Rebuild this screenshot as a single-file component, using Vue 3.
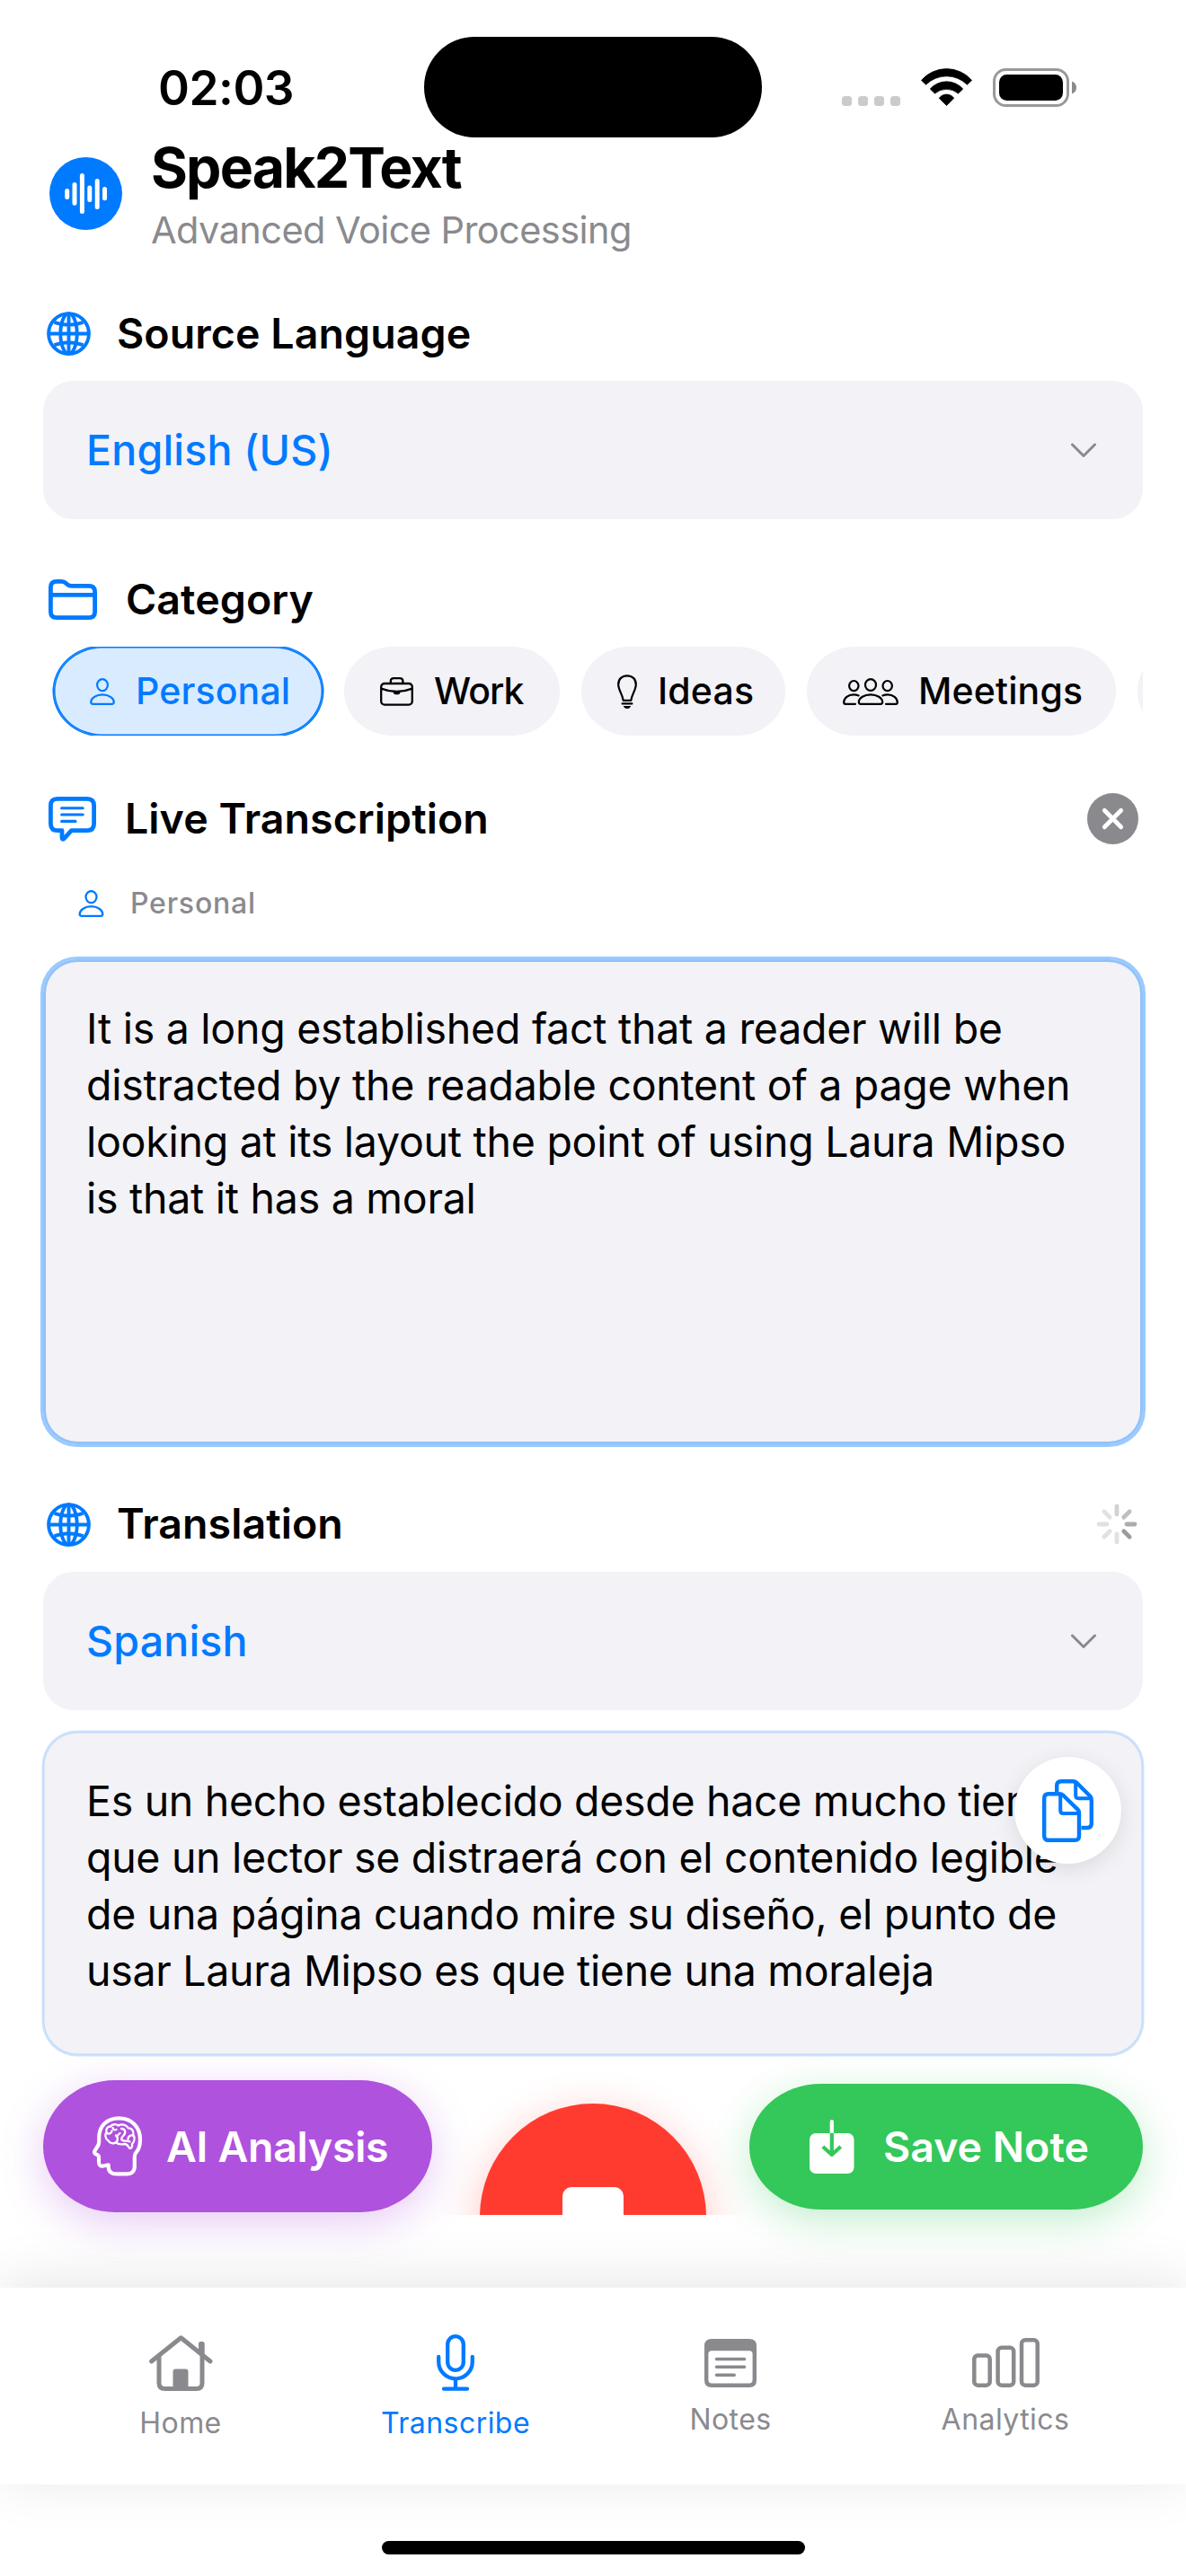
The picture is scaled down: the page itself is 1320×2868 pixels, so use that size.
<script setup>
const chips = [
  { id: 'personal', label: 'Personal', active: true },
  { id: 'work', label: 'Work' },
  { id: 'ideas', label: 'Ideas' },
  { id: 'meetings', label: 'Meetings' },
  { id: 'more', label: '' },
]

const transcript = [
  'It is a long established fact that a reader will be',
  'distracted by the readable content of a page when',
  'looking at its layout the point of using Laura Mipso',
  'is that it has a moral',
]

const translation = [
  'Es un hecho establecido desde hace mucho tiempo',
  'que un lector se distraerá con el contenido legible',
  'de una página cuando mire su diseño, el punto de',
  'usar Laura Mipso es que tiene una moraleja',
]

const spokes = ['#d2d2d3', '#bfbfc0', '#acacad', '#9b9b9c', '#e1e1e2', '#e1e1e2', '#e1e1e2', '#e1e1e2']
</script>

<template>
  <div class="screen">
    <header class="status">
      <div class="time">02:03</div>
      <div class="island"></div>
      <div class="indicators">
        <span class="dots"><i></i><i></i><i></i><i></i></span>
        <svg class="wifi" width="57" height="42" viewBox="0 0 57 42" fill="#000" stroke="#000" stroke-width=".8" stroke-linejoin="round">
          <path d="M.5 13.4A37 37 0 0 1 56.5 13.4L51.4 18.2A32.6 32.6 0 0 0 5.6 18.2Z" />
          <path d="M10.3 23A24.4 24.4 0 0 1 46.7 23L41.5 28.1A19.9 19.9 0 0 0 15.5 28.1Z" />
          <path d="M20.3 33.3A10.1 10.1 0 0 1 36.7 33.3L28.5 41.5Z" />
        </svg>
        <svg class="battery" width="94" height="43" viewBox="0 0 94 43">
          <rect x="1.5" y="1.5" width="82" height="40" rx="13" fill="none" stroke="#999" stroke-width="3" />
          <rect x="7" y="7" width="71" height="29" rx="8.5" fill="#000" />
          <path d="M88 14.5Q93 16.5 93 21.5T88 28.5Z" fill="#8a8a8a" />
        </svg>
      </div>
    </header>

    <div class="brand">
      <svg class="logo" width="81" height="81" viewBox="0 0 81 81">
        <circle cx="40.5" cy="40.5" r="40.5" fill="#007aff" />
        <g stroke="#fff" stroke-width="5" stroke-linecap="round">
          <path d="M19.7 37.4V44.6M28 30.4V51.2M36.4 20.4V60.6M44.8 34V47.6M53.2 26.4V55.4M61.5 35.4V45.8" />
        </g>
      </svg>
      <div>
        <h1>Speak2Text</h1>
        <p class="tagline">Advanced Voice Processing</p>
      </div>
    </div>

    <main>
      <div class="heading source">
        <svg class="globe" width="49" height="49" viewBox="0 0 49 49" fill="none" stroke="#007aff" stroke-width="3.9">
          <circle cx="24.5" cy="24.5" r="22.4" />
          <ellipse cx="24.5" cy="24.5" rx="9.2" ry="22.4" />
          <path d="M24.5 2V47M2 24.5H47M8.5 11.8Q24.500 17.800 40.500 11.800M8.500 37.200Q24.500 31.200 40.500 37.200" />
        </svg>
        <h2>Source Language</h2>
      </div>
      <div class="select">
        <span>English (US)</span>
        <svg width="28" height="17" viewBox="0 0 28 17" fill="none" stroke="#8a8a8e" stroke-width="3" stroke-linecap="round" stroke-linejoin="round"><path d="M1.5 2L14 14.5L26.5 2" /></svg>
      </div>

      <div class="heading category">
        <svg class="folder" width="54" height="45" viewBox="0 0 54 45" fill="none" stroke="#007aff" stroke-width="4.8">
          <path d="M2.4 9Q2.4 2.4 9 2.4H14.5Q17.5 2.4 19.3 4.2L20.7 5.5Q22.8 7.4 26 7.4H45Q51.6 7.4 51.6 13.8V36.3Q51.6 42.6 45 42.6H9Q2.4 42.6 2.4 36.3ZM2.4 17.3H51.6" />
        </svg>
        <h2>Category</h2>
      </div>
      <div class="chips">
        <div v-for="c in chips" :key="c.id" class="chip" :class="[c.id, { active: c.active }]">
          <svg v-if="c.id === 'personal'" width="28" height="30" viewBox="0 0 28 30" fill="none" stroke="#007aff" stroke-width="2.2">
            <ellipse cx="14" cy="7.6" rx="5.9" ry="6.5" />
            <path d="M1.2 26.8C1.2 22 7 18.4 14 18.4S26.8 22 26.8 26.8Q26.8 28.8 24.5 28.8H3.5Q1.2 28.8 1.2 26.8Z" />
          </svg>
          <svg v-else-if="c.id === 'work'" width="37" height="32" viewBox="0 0 37 32" fill="none" stroke="#000" stroke-width="2.3">
            <rect x="1.2" y="7" width="34.6" height="23.6" rx="3.8" />
            <path d="M11.8 7V4.6Q11.8 1.2 15.2 1.2H22Q25.4 1.2 25.4 4.6V7M1.2 12.6Q18.5 19.4 35.8 12.6" />
            <path d="M14.8 15.2H22.4V16.5Q22.4 19.3 19.8 19.3H17.4Q14.8 19.3 14.8 16.5Z" fill="#000" stroke="none" />
          </svg>
          <svg v-else-if="c.id === 'ideas'" width="22" height="38" viewBox="0 0 22 38" fill="none" stroke="#000" stroke-width="2.2">
            <path d="M6.6 28.8C6.2 22.5 1.2 17.5 1.2 11C1.2 5 5.3 1.3 11 1.3S20.8 5 20.8 11C20.8 17.5 15.8 22.5 15.4 28.8Z" stroke-linejoin="round" />
            <path d="M5.6 32.4H16.4" stroke-linecap="round" />
            <path d="M6.8 35.1H15.2Q14 38 11 38T6.8 35.1Z" fill="#000" stroke="none" />
          </svg>
          <svg v-else-if="c.id === 'meetings'" width="62" height="30" viewBox="0 0 62 30" fill="none" stroke="#000" stroke-width="2.2" stroke-linecap="round">
            <ellipse cx="31" cy="7.5" rx="6" ry="6.4" />
            <ellipse cx="12.3" cy="8.6" rx="5.2" ry="5.6" />
            <ellipse cx="49.7" cy="8.6" rx="5.2" ry="5.6" />
            <path d="M17.8 26.8C17.8 22 24 18.3 31 18.3S44.2 22 44.2 26.8Q44.2 28.8 42 28.8H20Q17.8 28.8 17.8 26.8ZM14 28.8H3Q1.2 28.8 1.2 27C1.2 22.3 6 18.3 12 18.3Q15.2 18.3 17.6 19.4M48 28.8H59Q60.8 28.8 60.8 27C60.8 22.3 56 18.3 50 18.3Q46.8 18.3 44.4 19.4" />
          </svg>
          <span>{{ c.label }}</span>
        </div>
      </div>

      <div class="heading live">
        <svg class="chat" width="53" height="50" viewBox="0 0 53 50" fill="none" stroke="#007aff" stroke-width="4.8" stroke-linejoin="round">
          <path d="M10 2.4H43Q50.6 2.4 50.6 10V30Q50.6 37.6 43 37.6H25.5L17.3 46.6Q15 48.4 15 45.4V37.6H10Q2.4 37.6 2.4 30V10Q2.4 2.4 10 2.4Z" />
          <path d="M14.6 12.8H38.2M14.6 20H38.2M14.6 27.4H30" stroke-width="3.1" stroke-linecap="round" />
        </svg>
        <h2>Live Transcription</h2>
        <svg class="clear" width="57" height="57" viewBox="0 0 57 57">
          <circle cx="28.5" cy="28.5" r="28.5" fill="#8a8a8e" />
          <path d="M19.3 19.3L37.700 37.700M37.700 19.300L19.300 37.700" stroke="#fff" stroke-width="4.8" stroke-linecap="round" />
        </svg>
      </div>
      <div class="tag">
        <svg width="29" height="30" viewBox="0 0 28 30" fill="none" stroke="#007aff" stroke-width="2.3">
          <ellipse cx="14" cy="7.6" rx="6" ry="6.5" />
          <path d="M1.2 26.8C1.2 22 7 18.2 14 18.2S26.8 22 26.8 26.8Q26.8 28.8 24.5 28.8H3.5Q1.2 28.8 1.2 26.8Z" />
        </svg>
        <span>Personal</span>
      </div>
      <div class="box transcript">
        <span v-for="line in transcript" :key="line">{{ line }}</span>
      </div>

      <div class="heading translate">
        <svg class="globe" width="49" height="49" viewBox="0 0 49 49" fill="none" stroke="#007aff" stroke-width="3.9">
          <circle cx="24.5" cy="24.5" r="22.4" />
          <ellipse cx="24.5" cy="24.5" rx="9.2" ry="22.4" />
          <path d="M24.5 2V47M2 24.5H47M8.5 11.8Q24.500 17.800 40.500 11.800M8.500 37.200Q24.500 31.200 40.500 37.200" />
        </svg>
        <h2>Translation</h2>
        <svg class="spinner" width="46" height="46" viewBox="-23 -23 46 46" stroke-width="4.8" stroke-linecap="round">
          <path v-for="(color, i) in spokes" :key="i" d="M0 -11V-20" :stroke="color" :transform="`rotate(${i * 45})`" />
        </svg>
      </div>
      <div class="select">
        <span>Spanish</span>
        <svg width="28" height="17" viewBox="0 0 28 17" fill="none" stroke="#8a8a8e" stroke-width="3" stroke-linecap="round" stroke-linejoin="round"><path d="M1.5 2L14 14.5L26.5 2" /></svg>
      </div>
      <div class="box translation">
        <span v-for="line in translation" :key="line">{{ line }}</span>
        <div class="copy">
          <svg width="57" height="70" viewBox="0 0 57 70" fill="none" stroke="#007aff" stroke-width="4.4" stroke-linejoin="round">
            <path d="M16.2 15V7Q16.2 2.2 21 2.2H34Q36.5 2.2 38.5 4L53.3 18.8Q54.8 20.5 54.8 23.5V49Q54.8 54 50 54H43.5" />
            <path d="M37.2 3.5V18Q37.2 21.2 40.3 21.2H54M20.2 17V34.8Q20.2 38 23.4 38H40.5" stroke-width="4" />
            <path d="M7 16.2H19Q21.5 16.2 23.5 18L39.5 33.6Q41 35.2 41 38V63Q41 67.8 36.2 67.8H7Q2.2 67.8 2.2 63V21Q2.2 16.2 7 16.2Z" />
          </svg>
        </div>
      </div>

      <div class="actions">
        <div class="action ai">
          <svg width="56" height="67" viewBox="0 0 56 67" fill="none" stroke="#fff" stroke-linecap="round" stroke-linejoin="round">
            <path stroke-width="4.2" d="M7.2 24C7.2 11 16 2.4 29.5 2.4C43.5 2.4 53 12 53 26C53 32 51.5 37 49 39.8C47.3 41.5 46.8 42.5 46.8 45V56C46.8 61.5 43.5 64.4 38 64.4H26.5C21 64.4 17.7 61.5 17.7 56.5V54.3L12 55.5C8.8 56 7 54.5 7 51.5V45.5C7 43.5 5.5 43.2 3.7 42.3C2 41.4 1.8 40 2.6 38.4C4.5 35 7.2 33 7.2 29Z" />
            <path stroke-width="2.3" d="M20 11.5C16.5 11.5 14.6 14.5 15.5 18C13.5 20.5 14 25.5 17.5 27.3C19 30.5 23.5 31 26 29.3C28.5 31.5 32.5 31.7 36 31C38.8 31 39.5 33.5 41 35.5C42.8 37 44.5 34.5 44 31.3C46.8 28 47.3 23.5 45.3 20.3C46.3 16.5 43.3 13 39.8 13.3C37.5 9.5 32 8.5 28.8 10.5C26 8.5 21.8 8.8 20 11.5Z" />
            <path stroke-width="2.3" d="M15.5 18.5C18 20.5 21 19.5 21.5 16.5M22.5 12.8C22.5 15 24.5 15.8 26.5 15M26 29.3C28.5 27 28.5 23.5 26 21.5M26.5 22.5L30.5 19M32 14C36.5 13.8 37.5 18.5 34.5 21.5C32 24 31 26.5 34.5 27.3M44.8 21.5C42 21 39.5 22.5 39.5 25.5M34.5 27.3C37.5 28 40 27 41.5 28.5" />
          </svg>
          <span>AI Analysis</span>
        </div>
        <div class="record-clip">
          <div class="record"><i></i></div>
        </div>
        <div class="action save">
          <svg width="50" height="60" viewBox="0 0 50 60" fill="none" stroke-width="4.2">
            <rect x="0" y="15" width="49.5" height="45" rx="7" fill="#fff" />
            <path d="M24.8 2.2V15" stroke="#fff" stroke-linecap="round" />
            <path d="M24.8 15V38M14.8 30L24.8 39L34.7 30" stroke="#34c759" stroke-linejoin="round" />
          </svg>
          <span>Save Note</span>
        </div>
      </div>
    </main>

    <nav class="tabs">
      <div class="tab">
        <svg width="71" height="62" viewBox="0 0 71 62" fill="none" stroke="#8a8a8e" stroke-width="5" stroke-linecap="round" stroke-linejoin="round">
          <path d="M2.6 29L35.4 2.8L68 29" />
          <path d="M11 23V53Q11 59.5 17.5 59.5H52.5Q59 59.5 59 53V23" />
          <path d="M55 19V9.5Q55 7 57 7H59.7Q61.7 7 61.7 9.5V24Z" fill="#8a8a8e" stroke="none" />
          <path d="M26.5 60V40.5Q26.5 37.6 29.4 37.6H40.6Q43.5 37.6 43.5 40.5V60Z" fill="#8a8a8e" stroke="none" />
        </svg>
        <span>Home</span>
      </div>
      <div class="tab current">
        <svg width="42" height="63" viewBox="0 0 42 63" fill="none" stroke="#007aff" stroke-width="4.3" stroke-linecap="round">
          <rect x="12.2" y="2.2" width="17.6" height="37.6" rx="8.8" />
          <path d="M2.2 25V30.5A18.8 18.8 0 0 0 39.8 30.5V25M21 49.5V60M8 60.7H34" />
        </svg>
        <span>Transcribe</span>
      </div>
      <div class="tab">
        <svg width="58" height="54" viewBox="0 0 58 54">
          <path fill="#8a8a8e" fill-rule="evenodd" d="M8 0H50Q58 0 58 8V46Q58 54 50 54H8Q0 54 0 46V8Q0 0 8 0ZM8 13.3Q4.4 13.3 4.4 17V45.5Q4.4 49.5 8.4 49.5H49.6Q53.6 49.5 53.6 45.5V17Q53.6 13.3 50 13.3Z" />
          <path d="M13.5 22.5H44.5M13.5 31.3H44.5M13.5 40.2H33.2" stroke="#8a8a8e" stroke-width="3.6" stroke-linecap="round" />
        </svg>
        <span>Notes</span>
      </div>
      <div class="tab">
        <svg width="75" height="55" viewBox="0 0 75 55" fill="none" stroke="#8a8a8e" stroke-width="4.5">
          <rect x="2.3" y="19.5" width="17.4" height="33.2" rx="4" />
          <rect x="28.6" y="10.8" width="17.6" height="41.9" rx="4" />
          <rect x="55" y="2.3" width="17.7" height="50.4" rx="4" />
        </svg>
        <span>Analytics</span>
      </div>
    </nav>
    <div class="home-indicator"></div>
  </div>
</template>

<style>
body {
  background: #fff;
}
</style>

<style scoped>
.screen {
  width: 1320px;
  height: 2868px;
  overflow: hidden;
  display: flex;
  flex-direction: column;
  background: #fff;
  color: #000;
  font-family: Inter, "Liberation Sans", sans-serif;
  white-space: nowrap;
}
svg {
  display: block;
  flex: none;
}
h1,
h2,
p {
  margin: 0;
}

/* Status bar */
.status {
  flex: none;
  height: 112px;
  padding-top: 41px;
  display: grid;
  grid-template-columns: 472px 376px 1fr;
  align-items: center;
}
.time {
  padding: 2px 0 0 176px;
  font-size: 53px;
  line-height: 60px;
  font-weight: 600;
  letter-spacing: -0.5px;
}
.island {
  height: 112px;
  border-radius: 56px;
  background: #000;
}
.indicators {
  display: flex;
  align-items: center;
  padding-left: 89px;
}
.dots {
  display: flex;
  gap: 7px;
  margin: 30px 23px 0 0;
}
.dots i {
  width: 11px;
  height: 11px;
  border-radius: 3.5px;
  background: #cbcbcb;
}
.wifi {
  margin-right: 23px;
}

/* App title */
.brand {
  flex: none;
  display: flex;
  align-items: flex-start;
  gap: 32px;
  height: 139px;
  padding-left: 55px;
}
.logo {
  margin-top: 22px;
}
h1 {
  font-size: 62.5px;
  line-height: 67px;
  font-weight: 700;
  letter-spacing: -1.8px;
}
.tagline {
  font-size: 41.5px;
  line-height: 72px;
  letter-spacing: -0.58px;
  color: #8a8a8e;
}

main {
  flex: none;
  padding: 0 48px;
}
.heading {
  display: flex;
  align-items: center;
  height: 105px;
}
h2 {
  margin-bottom: 2px;
  font-size: 46.5px;
  line-height: 60px;
  font-weight: 600;
  letter-spacing: 0.08px;
}
.source {
  margin-top: 27px;
}
.category {
  margin-top: 37px;
}
.live {
  margin-top: 40px;
}
.translate {
  margin-top: 36px;
  height: 106px;
}
.globe {
  margin: 0 29px 0 4px;
}
.folder {
  margin: 0 32px 0 6px;
}
.chat {
  margin: 0 32px 0 6px;
}
.clear {
  margin: 0 5px 0 auto;
}
.spinner {
  margin: 0 6px 0 auto;
}

.select {
  display: flex;
  align-items: center;
  justify-content: space-between;
  height: 154px;
  box-sizing: border-box;
  padding: 0 52px 0 48px;
  border-radius: 34px;
  background: #f2f2f7;
  color: #007aff;
  font-size: 46.5px;
  font-weight: 500;
  letter-spacing: 0.2px;
}

/* Category chips, cut off where the list scrolls */
.chips {
  display: flex;
  gap: 24px;
  height: 99px;
  padding-left: 12px;
  overflow: hidden;
}
.chip {
  flex: none;
  display: flex;
  align-items: center;
  gap: 23px;
  box-sizing: border-box;
  padding-left: 40px;
  border-radius: 54px / 50%;
  background: #f2f2f7;
  font-size: 41px;
  font-weight: 500;
  letter-spacing: 0.15px;
}
.chip span {
  margin-bottom: 1px;
}
.chip.personal {
  width: 299px;
}
.chip.work {
  width: 240px;
  letter-spacing: -0.9px;
}
.chip.ideas {
  width: 227px;
}
.chip.meetings {
  width: 344px;
  gap: 22px;
}
.chip.more {
  width: 240px;
}
.chip.active {
  background: #d9ebff;
  color: #007aff;
  box-shadow: 0 0 0 1.5px #007aff, inset 0 0 0 1.5px #007aff;
}

.tag {
  display: flex;
  align-items: center;
  gap: 29px;
  height: 83px;
  padding-left: 39px;
  font-size: 32px;
  font-weight: 500;
  letter-spacing: 0.79px;
  color: #8a8a8e;
}

.box {
  position: relative;
  display: flex;
  flex-direction: column;
  box-sizing: border-box;
  padding: 46px 48px;
  border-radius: 38px;
  background: #f2f2f7;
  font-size: 46.5px;
  line-height: 63px;
  letter-spacing: -0.27px;
}
.transcript {
  height: 540px;
  margin-top: 21px;
  box-shadow: 0 0 0 3px #99caff, inset 0 0 0 3px #91c2fa;
}
.translation {
  height: 360px;
  margin-top: 24px;
  letter-spacing: -0.31px;
  box-shadow: 0 0 0 1.5px #cce4ff, inset 0 0 0 1.5px #c2daf9;
}
.copy {
  position: absolute;
  top: 28px;
  right: 24px;
  width: 119px;
  height: 119px;
  display: flex;
  align-items: center;
  justify-content: center;
  border-radius: 50%;
  background: #fff;
  box-shadow: 0 6px 24px rgba(0, 0, 0, 0.1);
}

/* Bottom actions */
.actions {
  display: flex;
  align-items: center;
  height: 147px;
  margin-top: 28px;
}
.action {
  display: flex;
  align-items: center;
  box-sizing: border-box;
  border-radius: 80px / 50%;
  color: #fff;
  font-size: 46.5px;
  font-weight: 600;
}
.ai {
  width: 433px;
  height: 147px;
  padding-left: 55px;
  gap: 26px;
  letter-spacing: -0.3px;
  background: #af52de;
  box-shadow: 0 12px 48px rgba(175, 82, 222, 0.3);
}
.save {
  width: 438px;
  height: 140px;
  padding-left: 67px;
  gap: 32px;
  background: #34c759;
  box-shadow: 0 12px 48px rgba(52, 199, 89, 0.3);
}
.record-clip {
  align-self: flex-start;
  width: 252px;
  height: 124px;
  margin: 26px 48px 0 53px;
  clip-path: inset(-90px -60px 0 -60px);
}
.record {
  display: flex;
  align-items: center;
  justify-content: center;
  height: 252px;
  border-radius: 50%;
  background: #ff3b30;
  box-shadow: 0 12px 48px rgba(255, 59, 48, 0.3);
}
.record i {
  width: 68px;
  height: 66px;
  border-radius: 10px;
  background: #fff;
}

/* Tab bar */
.tabs {
  flex: none;
  display: grid;
  grid-template-columns: repeat(4, 1fr);
  height: 219px;
  margin-top: 84px;
  padding: 3px 48px 0;
  box-sizing: border-box;
  background: #fff;
  box-shadow: 0 -6px 60px rgba(0, 0, 0, 0.1);
}
.tab {
  display: flex;
  flex-direction: column;
  align-items: center;
  justify-content: center;
  gap: 16px;
  font-size: 32px;
  line-height: 39px;
  letter-spacing: 0.45px;
  color: #8a8a8e;
}
.tab.current {
  color: #007aff;
}
.home-indicator {
  flex: none;
  width: 471px;
  height: 15px;
  margin: 63px auto 0;
  border-radius: 8px;
  background: #000;
}
</style>
